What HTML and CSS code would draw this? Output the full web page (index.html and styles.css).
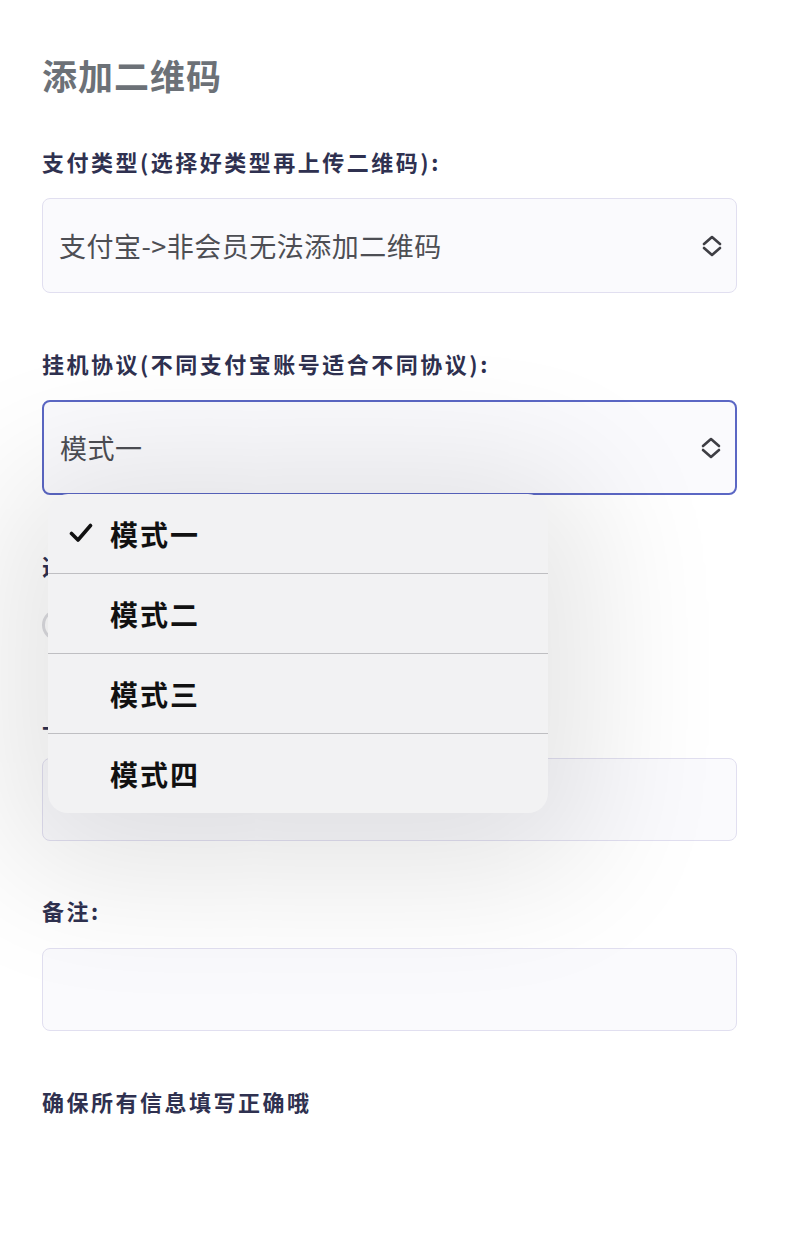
FILE: index.html
```html
<!DOCTYPE html>
<html lang="zh-CN">
<head>
<meta charset="utf-8">
<title>添加二维码</title>
<link rel="stylesheet" href="styles.css">
</head>
<body>
<main class="page">
  <h1 class="title">添加二维码</h1>

  <div class="group">
    <div class="label">支付类型(选择好类型再上传二维码):</div>
    <div class="select">
      <span class="select-text">支付宝-&gt;非会员无法添加二维码</span>
      <svg class="chev" width="20" height="22" viewBox="0 0 20 22"><path d="M2 9 L10 2 L18 9 M2 13 L10 20 L18 13" fill="none" stroke="#3e3e44" stroke-width="2.6" stroke-linecap="round" stroke-linejoin="round"/></svg>
    </div>
  </div>

  <div class="group">
    <div class="label">挂机协议(不同支付宝账号适合不同协议):</div>
    <div class="select-wrap">
      <div class="select focus">
        <span class="select-text">模式一</span>
        <svg class="chev" width="20" height="22" viewBox="0 0 20 22"><path d="M2 9 L10 2 L18 9 M2 13 L10 20 L18 13" fill="none" stroke="#3e3e44" stroke-width="2.6" stroke-linecap="round" stroke-linejoin="round"/></svg>
      </div>
      <ul class="menu">
        <li class="item checked">
          <svg class="check" width="24" height="20" viewBox="0 0 24 20"><path d="M2.5 10.5 L9 17 L21.5 2.5" fill="none" stroke="#111" stroke-width="3.6" stroke-linecap="round" stroke-linejoin="round"/></svg>
          <span>模式一</span>
        </li>
        <li class="item"><span>模式二</span></li>
        <li class="item"><span>模式三</span></li>
        <li class="item"><span>模式四</span></li>
      </ul>
    </div>
  </div>

  <div class="group hidden-group">
    <div class="label">选择状态:</div>
    <div class="switch"><span class="knob"></span></div>
  </div>

  <div class="group upload-group">
    <div class="label">上传二维码:</div>
    <div class="input"></div>
  </div>

  <div class="group remark-group">
    <div class="label">备注:</div>
    <div class="input"></div>
  </div>

  <p class="note">确保所有信息填写正确哦</p>
</main>
</body>
</html>
```

FILE: styles.css
```css
html, body {
  margin: 0;
  padding: 0;
  background: #ffffff;
}

body {
  font-family: "Noto Sans CJK SC", "Noto Sans", "Liberation Sans", sans-serif;
  color: #2f3150;
}

.page {
  padding: 51px 48px 40px 42px;
}

.title {
  margin: 0 0 47px 0;
  font-size: 35px;
  line-height: 48px;
  font-weight: 600;
  color: #6c7177;
  letter-spacing: 1px;
}

.group {
  margin-bottom: 55px;
}

.label {
  font-size: 22px;
  line-height: 30px;
  font-weight: 700;
  color: #2f3150;
  letter-spacing: 2.5px;
  margin-bottom: 22px;
}

.select {
  box-sizing: border-box;
  height: 95px;
  border: 1.5px solid #e1dff0;
  border-radius: 8px;
  background: #fafafd;
  display: flex;
  align-items: center;
  justify-content: space-between;
  padding: 0 14px 0 16px;
}

.select.focus {
  border: 2px solid #5b67c4;
}

.select-text {
  font-size: 27px;
  color: #4d4e54;
  letter-spacing: 0.5px;
}

.select-wrap {
  position: relative;
}

.menu {
  position: absolute;
  top: 94px;
  left: 6px;
  width: 500px;
  margin: 0;
  padding: 0;
  list-style: none;
  background: #f2f2f3;
  border-radius: 20px;
  box-shadow: 0 20px 140px 40px rgba(0, 0, 0, 0.11);
  z-index: 5;
  overflow: hidden;
}

.item {
  height: 80px;
  display: flex;
  align-items: center;
  padding-left: 62px;
  font-size: 28px;
  font-weight: 700;
  color: #111111;
  letter-spacing: 2px;
  position: relative;
  border-top: 1px solid #bfbfc2;
  box-sizing: border-box;
}

.item:first-child {
  border-top: none;
  height: 79px;
}

.check {
  position: absolute;
  left: 21px;
  top: 29px;
}

.hidden-group {
  margin-bottom: 62px;
}

.hidden-group .label {
  margin-bottom: 29px;
}

.switch {
  width: 58px;
  height: 32px;
  border-radius: 16px;
  background: #dcdce0;
  position: relative;
}

.knob {
  position: absolute;
  left: 3px;
  top: 3px;
  width: 26px;
  height: 26px;
  border-radius: 50%;
  background: #ffffff;
}

.upload-group {
  margin-bottom: 54px;
}

.upload-group .label {
  margin-bottom: 25px;
}

.remark-group {
  margin-bottom: 55px;
}

.remark-group .label {
  margin-bottom: 23px;
}

.input {
  box-sizing: border-box;
  height: 83px;
  border: 1.5px solid #e1dff0;
  border-radius: 8px;
  background: #fafafd;
}

.note {
  margin: 0;
  font-size: 22px;
  line-height: 30px;
  font-weight: 700;
  color: #2f3150;
  letter-spacing: 2.5px;
}
```
